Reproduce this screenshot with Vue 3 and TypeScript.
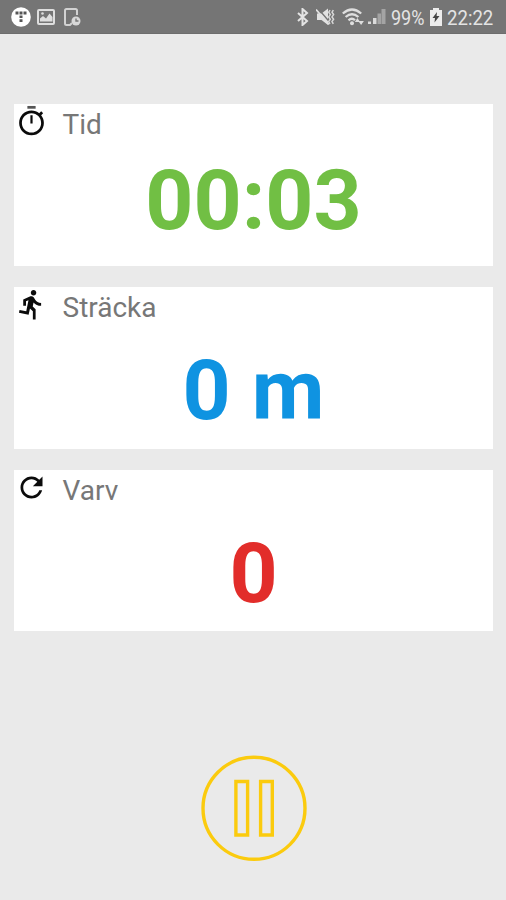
<script setup lang="ts">
type Kind = 'time' | 'distance' | 'laps'

interface Metric {
  kind: Kind
  label: string
  value: string
}

const metrics: Metric[] = [
  { kind: 'time', label: 'Tid', value: '00:03' },
  { kind: 'distance', label: 'Sträcka', value: '0 m' },
  { kind: 'laps', label: 'Varv', value: '0' },
]

const icons: Record<Kind, string> = {
  time: 'M11.200 13.500h1.600V7.500h-1.600v6zm7.830-6.110 1.42-1.42c-.43-.51-.9-.99-1.41-1.41l-1.42 1.42C16.07 4.74 14.12 4 12 4c-4.97 0-9 4.03-9 9s4.02 9 9 9 9-4.03 9-9c0-2.12-.74-4.07-1.97-5.61zM12 20c-3.87 0-7-3.13-7-7s3.13-7 7-7 7 3.13 7 7-3.13 7-7 7z',
  distance: 'M13.49 5.48c1.1 0 2-.9 2-2s-.9-2-2-2-2 .9-2 2 .9 2 2 2zm-3.6 13.9 1-4.4 2.1 2v6h2v-7.5l-2.1-2 .6-3c1.3 1.5 3.3 2.5 5.5 2.5v-2c-1.9 0-3.5-1-4.3-2.4l-1-1.6c-.4-.6-1-1-1.7-1-.3 0-.5.1-.8.1l-5.2 2.2v4.7h2v-3.4l1.8-.7-1.6 8.1-4.9-1-.4 2 7 1.4z',
  laps: 'M17.65 6.35C16.2 4.9 14.21 4 12 4c-4.42 0-7.99 3.58-7.99 8s3.57 8 7.99 8c3.73 0 6.84-2.55 7.73-6h-2.08c-.82 2.33-3.04 4-5.65 4-3.31 0-6-2.69-6-6s2.69-6 6-6c1.66 0 3.14.69 4.22 1.78L13 11h7V4l-2.35 2.35z',
}
</script>

<template>
  <div class="screen">
    <header class="status">
      <div class="notifications">
        <svg width="20" height="20" viewBox="0 0 20 20">
          <circle cx="10" cy="10" r="9.8" fill="#fff" />
          <path d="M4.5 4.5h3v3h-3zM8.5 4.5h3v3h-3zM12.5 4.5h3v3h-3zM8.5 8.5h3v2.6h-3zM8.5 12.2h3v2.8h-3z" fill="#555" />
        </svg>
        <svg class="picture" width="18" height="16" viewBox="0 0 18 16">
          <rect x="1" y="1" width="16" height="14" rx="1" fill="none" stroke="#dedede" stroke-width="2" />
          <path d="M3 12.5V9.500l3-2.500 3 2.5L12.5 4.500 15.500 8v4.5z" fill="#dedede" />
          <circle cx="5.5" cy="4.5" r="1.3" fill="#dedede" />
        </svg>
        <svg width="17" height="18" viewBox="0 0 17 18">
          <path d="M13 7V2.5Q13 1 11.5 1h-9Q1 1 1 2.5v13Q1 17 2.5 17H6l2-2" fill="none" stroke="#d2d2d2" stroke-width="2" />
          <circle cx="12" cy="13" r="4.500" fill="#d8d8d8" />
          <path d="M12 10.500V13h2.500" fill="none" stroke="#777" stroke-width="1.4" />
        </svg>
      </div>
      <div class="system">
        <svg width="12" height="18" viewBox="0 0 12 18">
          <path d="m1 5 9 8-4.5 4V1L10 5l-9 8" fill="none" stroke="#e4e4e4" stroke-width="2" />
        </svg>
        <svg class="mute" width="19" height="18" viewBox="0 0 19 18">
          <path d="M1 5.500h4.500L12 .5v16.500l-6.500-5H1z" fill="#e2e2e2" />
          <path d="m2 .5 12 14" stroke="#757575" stroke-width="1.3" />
          <path d="m0 1.500 13 15" stroke="#e2e2e2" stroke-width="1.8" />
          <path d="m14 2-1.3 2.3 1.6 2.3-1.6 2.3 1.6 2.3-1.6 2.3L14 15.800M17.300 2 16 4.300l1.6 2.3L16 8.900l1.6 2.3-1.6 2.3 1.300 2.300" fill="none" stroke="#d8d8d8" stroke-width="1.5" />
        </svg>
        <svg class="wifi" width="23" height="18" viewBox="0 0 23 18">
          <path d="M.8 5.500Q10 -2.500 19.200 5.500M3.600 9q6.400-5.500 12.800 0M6.500 12.300q3.500-3 6.500 0" fill="none" stroke="#dedede" stroke-width="2.300" />
          <circle cx="10" cy="15.300" r="2" fill="#dedede" />
          <path d="m12.800 14 2.600-4 2.600 4zM16.300 13h5.600l-2.800 4z" fill="#dedede" />
        </svg>
        <svg class="signal" width="18" height="17" viewBox="0 0 18 17">
          <path d="M0 13.500h3V16H0zM5 10h3.500v6H5z" fill="#dadada" />
          <path d="M9.500 5.500h3.500V16H9.500zM13.500 1h4v15h-4z" fill="#a4a4a4" />
        </svg>
        <span class="percent">99%</span>
        <svg class="battery" width="12" height="18" viewBox="0 0 12 18">
          <path d="M3 0h6v2h3v16H0V2h3z" fill="#ececec" />
          <path d="M7 4 2.500 10H5l-.5 4.500L9.500 8H6.600z" fill="#444" />
        </svg>
        <span class="clock">22:22</span>
      </div>
    </header>

    <main class="metrics">
      <section v-for="metric in metrics" :key="metric.kind" class="card" :class="metric.kind">
        <div class="heading">
          <svg class="icon" viewBox="0 0 24 24">
            <path v-if="metric.kind === 'time'" class="crown" d="M9 .7h6v2H9z" />
            <path :d="icons[metric.kind]" />
          </svg>
          <h2 class="label">{{ metric.label }}</h2>
        </div>
        <p class="value">{{ metric.value }}</p>
      </section>
    </main>

    <footer class="controls">
      <button class="pause" type="button" aria-label="Pausa">
        <svg width="106" height="106" viewBox="0 0 106 106" fill="none" stroke="#fbcb0e" stroke-width="3.400">
          <circle cx="53" cy="53.300" r="51" />
          <path d="M34.900 26.500h11.700v53.500H34.900zM59.600 26.500h11.700v53.500H59.600z" />
        </svg>
      </button>
    </footer>
  </div>
</template>

<style>
body {
  margin: 0;
  background: #eaeaea;
}
</style>

<style scoped>
.screen {
  box-sizing: border-box;
  height: 900px;
  background: #eaeaea;
  font-family: Roboto, "Liberation Sans", sans-serif;
}
.status {
  box-sizing: border-box;
  height: 34px;
  padding: 0 12px 0 11px;
  display: flex;
  align-items: center;
  justify-content: space-between;
  background: #757575;
  border-bottom: 1px solid #6d6d6d;
}
.status svg {
  display: block;
  flex: none;
}
.notifications,
.system {
  display: flex;
  align-items: center;
}
.picture {
  margin: 0 9px 0 6px;
}
.mute {
  margin-left: 7px;
}
.wifi {
  margin-left: 7px;
}
.signal {
  margin-left: 3px;
}
.percent,
.clock {
  display: block;
  color: #e4e4e4;
  font-size: 20px;
  line-height: 24px;
  padding-top: 2px;
  white-space: nowrap;
  transform-origin: left center;
}
.percent {
  width: 35px;
  margin-left: 5px;
  transform: scaleX(.9);
}
.clock {
  width: 47px;
  margin-left: 5px;
  transform: scaleX(.93);
}
.battery {
  margin-left: 4px;
}
.metrics {
  display: flex;
  flex-direction: column;
  gap: 21.300px;
  padding: 70.400px 13px 0 14px;
}
.card {
  height: 161.500px;
  background: #fff;
}
.heading {
  display: flex;
  height: 40px;
}
.icon {
  width: 33px;
  height: 33px;
  margin: 1px 0 0 1px;
  flex: none;
  fill: #0b0b0b;
}
.crown {
  fill: #555;
}
.label {
  margin: 4px 0 0 14.500px;
  color: #777;
  font-size: 28px;
  font-weight: 400;
  line-height: 33px;
}
.value {
  margin: 15px 0 0;
  font-size: 84px;
  font-weight: 700;
  line-height: 98px;
  text-align: center;
}
.time .value {
  margin-top: 8px;
  color: #71bf44;
}
.distance .value {
  color: #0f93e1;
}
.laps .value {
  color: #e22d2a;
}
.controls {
  display: flex;
  justify-content: center;
  padding: 124px 0 0 2px;
}
.pause {
  display: block;
  padding: 0;
  border: 0;
  background: none;
}
.pause svg {
  display: block;
}
</style>
